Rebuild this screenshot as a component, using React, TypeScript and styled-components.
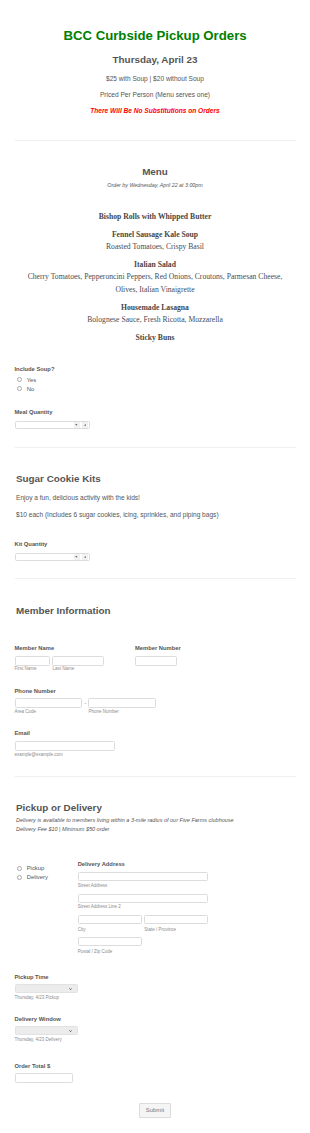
import React from "react";
import styled, { createGlobalStyle } from "styled-components";

const GlobalStyle = createGlobalStyle`
  html, body { margin: 0; padding: 0; background: #ffffff; }
  body { font-family: "Liberation Sans", Arial, sans-serif; color: #555555; }
  * { box-sizing: border-box; }
`;

const Page = styled.div`
  width: 310px;
  padding: 0 14.5px 15px;
  display: flex;
  flex-direction: column;
  align-items: flex-start;
`;

const Header = styled.header`
  align-self: stretch;
  display: flex;
  flex-direction: column;
  align-items: center;
  text-align: center;
`;

const Title = styled.h1`
  margin: 27.5px 0 0;
  font-size: 13.2px;
  line-height: 16px;
  font-weight: 700;
  color: #008000;
`;

const DateHeading = styled.h2`
  margin: 10.5px 0 0;
  font-size: 9.86px;
  line-height: 12px;
  font-weight: 700;
  color: #555555;
`;

const InfoText = styled.p<{ $mt?: number; $lh?: number }>`
  margin: ${(p) => p.$mt ?? 0}px 0 0;
  font-size: 6.58px;
  line-height: ${(p) => p.$lh ?? 16}px;
  color: #555555;
`;

const Warning = styled(InfoText)`
  color: #ff0000;
  font-weight: 700;
  font-style: italic;
`;

const Divider = styled.hr<{ $mt: number }>`
  align-self: stretch;
  margin: ${(p) => p.$mt}px 0 0;
  border: 0;
  height: 1px;
  background: #efefef;
`;

const SectionTitle = styled.h3<{ $mt: number; $center?: boolean }>`
  margin: ${(p) => p.$mt}px 0 0;
  padding-left: ${(p) => (p.$center ? 0 : 1.5)}px;
  align-self: ${(p) => (p.$center ? "center" : "flex-start")};
  font-size: 9.86px;
  line-height: 12px;
  font-weight: 700;
  color: #555555;
`;

const Note = styled.p<{ $mt: number; $size: number; $lh: number; $center?: boolean }>`
  margin: ${(p) => p.$mt}px 0 0;
  padding-left: ${(p) => (p.$center ? 0 : 1.5)}px;
  align-self: ${(p) => (p.$center ? "center" : "flex-start")};
  font-size: ${(p) => p.$size}px;
  line-height: ${(p) => p.$lh}px;
  font-style: italic;
  color: #555555;
`;

const BodyText = styled.p<{ $mt: number }>`
  margin: ${(p) => p.$mt}px 0 0;
  padding-left: 1.5px;
  font-size: 6.58px;
  line-height: 8px;
  color: #555555;
`;

const MenuList = styled.div`
  align-self: center;
  width: 272px;
  margin-top: 21.85px;
  display: flex;
  flex-direction: column;
  gap: 5.7px;
  text-align: center;
  font-family: "Liberation Serif", "Times New Roman", serif;
  font-size: 7.66px;
  line-height: 12.3px;
`;

const Dish = styled.div``;

const DishName = styled.div`
  font-weight: 700;
  color: #474747;
`;

const DishDesc = styled.div`
  color: #4a4b52;
`;

const FieldLabel = styled.label<{ $mt?: number }>`
  display: block;
  margin-top: ${(p) => p.$mt ?? 0}px;
  font-size: 5.8px;
  line-height: 7px;
  font-weight: 700;
  color: #555555;
  white-space: nowrap;
`;

const TextInput = styled.input<{ $w: number; $h: number; $mt?: number }>`
  display: block;
  appearance: none;
  width: ${(p) => p.$w}px;
  height: ${(p) => p.$h}px;
  margin: ${(p) => p.$mt ?? 0}px 0 0;
  padding: 0;
  border: 1px solid #dcdcdc;
  border-radius: 1.5px;
  background: #ffffff;
  outline: none;
`;

const SubLabel = styled.span<{ $mt?: number }>`
  display: block;
  margin-top: ${(p) => p.$mt ?? 0}px;
  font-size: 4.5px;
  line-height: 5px;
  color: #8c8c8c;
  white-space: nowrap;
`;

const RadioGroup = styled.div<{ $mt?: number }>`
  display: flex;
  flex-direction: column;
  margin-top: ${(p) => p.$mt ?? 0}px;
  padding-left: 2.7px;
`;

const RadioRow = styled.label`
  display: flex;
  align-items: center;
  gap: 4.5px;
  height: 9px;
  font-size: 5.9px;
  color: #555555;
`;

const RadioInput = styled.input`
  appearance: none;
  flex: none;
  width: 5px;
  height: 5px;
  margin: 0;
  border: 0.6px solid #a8a8a8;
  border-radius: 50%;
  background: #ffffff;
`;

const NumberBox = styled.div<{ $mt: number }>`
  width: 75px;
  height: 8.5px;
  margin-top: ${(p) => p.$mt}px;
  border: 1px solid #dcdcdc;
  border-radius: 1.5px;
  background: #ffffff;
  display: flex;
  align-items: center;
  justify-content: flex-end;
  gap: 2.4px;
  padding-right: 0.6px;
`;

const SpinButton = styled.span`
  width: 6px;
  height: 5.5px;
  background: #f1f1f1;
  display: flex;
  align-items: center;
  justify-content: center;
`;

const SelectBox = styled.div<{ $mt: number }>`
  width: 63px;
  height: 9.4px;
  margin-top: ${(p) => p.$mt}px;
  border: 0.5px solid #e2e2e2;
  border-radius: 1.5px;
  background: #ececec;
  display: flex;
  align-items: center;
  justify-content: flex-end;
  padding-right: 4.2px;
`;

const Row = styled.div<{ $mt?: number; $gap?: number }>`
  display: flex;
  align-items: flex-start;
  gap: ${(p) => p.$gap ?? 0}px;
  margin-top: ${(p) => p.$mt ?? 0}px;
`;

const Col = styled.div<{ $w?: number; $pt?: number }>`
  display: flex;
  flex-direction: column;
  width: ${(p) => (p.$w ? `${p.$w}px` : "auto")};
  padding-top: ${(p) => p.$pt ?? 0}px;
  flex: none;
`;

const Dash = styled.span`
  width: 6.3px;
  height: 10px;
  display: flex;
  align-items: center;
  justify-content: center;
  font-size: 5.5px;
  color: #777777;
`;

const SubmitButton = styled.button`
  align-self: center;
  margin-top: 20px;
  width: 32px;
  height: 14.5px;
  padding: 0;
  border: 1px solid #dcdcdc;
  border-radius: 1px;
  background: #f5f5f5;
  font-family: "Liberation Sans", Arial, sans-serif;
  font-size: 5.9px;
  color: #777777;
`;

const Triangle = ({ up }: { up?: boolean }) => (
  <svg width="2.6" height="1.8" viewBox="0 0 4 3">
    <path d={up ? "M0 3 L2 0 L4 3 Z" : "M0 0 L4 0 L2 3 Z"} fill="#6a6a6a" />
  </svg>
);

const Chevron = () => (
  <svg width="3.2" height="2.2" viewBox="0 0 6 4">
    <path d="M0.6 0.6 L3 3 L5.4 0.6" fill="none" stroke="#333" strokeWidth="1.4" />
  </svg>
);

const NumberField = ({ mt }: { mt: number }) => (
  <NumberBox $mt={mt}>
    <SpinButton>
      <Triangle />
    </SpinButton>
    <SpinButton>
      <Triangle up />
    </SpinButton>
  </NumberBox>
);

const SelectField = ({ mt }: { mt: number }) => (
  <SelectBox $mt={mt}>
    <Chevron />
  </SelectBox>
);

export default function App() {
  return (
    <>
      <GlobalStyle />
      <Page>
        <Header>
          <Title>BCC Curbside Pickup Orders</Title>
          <DateHeading>Thursday, April 23</DateHeading>
          <InfoText $mt={5}>$25 with Soup | $20 without Soup</InfoText>
          <InfoText>Priced Per Person (Menu serves one)</InfoText>
          <Warning>There Will Be No Substitutions on Orders</Warning>
        </Header>
        <Divider $mt={21} />

        <SectionTitle $mt={25} $center>
          Menu
        </SectionTitle>
        <Note $mt={3} $size={5.3} $lh={8} $center>
          Order by Wednesday, April 22 at 3:00pm
        </Note>
        <MenuList>
          <Dish>
            <DishName>Bishop Rolls with Whipped Butter</DishName>
          </Dish>
          <Dish>
            <DishName>Fennel Sausage Kale Soup</DishName>
            <DishDesc>Roasted Tomatoes, Crispy Basil</DishDesc>
          </Dish>
          <Dish>
            <DishName>Italian Salad</DishName>
            <DishDesc>
              Cherry Tomatoes, Pepperoncini Peppers, Red Onions, Croutons, Parmesan Cheese, Olives,
              Italian Vinaigrette
            </DishDesc>
          </Dish>
          <Dish>
            <DishName>Housemade Lasagna</DishName>
            <DishDesc>Bolognese Sauce, Fresh Ricotta, Mozzarella</DishDesc>
          </Dish>
          <Dish>
            <DishName>Sticky Buns</DishName>
          </Dish>
        </MenuList>

        <FieldLabel $mt={22.15}>Include Soup?</FieldLabel>
        <RadioGroup $mt={2}>
          <RadioRow>
            <RadioInput type="radio" name="soup" />
            Yes
          </RadioRow>
          <RadioRow>
            <RadioInput type="radio" name="soup" />
            No
          </RadioRow>
        </RadioGroup>
        <FieldLabel $mt={15.7}>Meal Quantity</FieldLabel>
        <NumberField mt={4.8} />
        <Divider $mt={17.2} />

        <SectionTitle $mt={25}>Sugar Cookie Kits</SectionTitle>
        <BodyText $mt={9}>Enjoy a fun, delicious activity with the kids!</BodyText>
        <BodyText $mt={9.3}>$10 each (Includes 6 sugar cookies, icing, sprinkles, and piping bags)</BodyText>
        <FieldLabel $mt={22.2}>Kit Quantity</FieldLabel>
        <NumberField mt={4.8} />
        <Divider $mt={16.5} />

        <SectionTitle $mt={25.7}>Member Information</SectionTitle>
        <Row $mt={28.5}>
          <Col $w={120.5}>
            <FieldLabel>Member Name</FieldLabel>
            <Row $mt={3.5} $gap={2.6}>
              <Col>
                <TextInput $w={35.4} $h={10} />
                <SubLabel $mt={0.8}>First Name</SubLabel>
              </Col>
              <Col>
                <TextInput $w={51.4} $h={10} />
                <SubLabel $mt={0.8}>Last Name</SubLabel>
              </Col>
            </Row>
          </Col>
          <Col>
            <FieldLabel>Member Number</FieldLabel>
            <TextInput $w={41.7} $h={10} $mt={3.5} />
          </Col>
        </Row>
        <FieldLabel $mt={16.3}>Phone Number</FieldLabel>
        <Row $mt={3.5}>
          <Col>
            <TextInput $w={67.7} $h={10} />
            <SubLabel $mt={1.2}>Area Code</SubLabel>
          </Col>
          <Dash>-</Dash>
          <Col>
            <TextInput $w={67.4} $h={10} />
            <SubLabel $mt={1.2}>Phone Number</SubLabel>
          </Col>
        </Row>
        <FieldLabel $mt={16}>Email</FieldLabel>
        <TextInput $w={100.4} $h={10} $mt={3.8} />
        <SubLabel $mt={0.9}>example@example.com</SubLabel>
        <Divider $mt={18.8} />

        <SectionTitle $mt={25.3}>Pickup or Delivery</SectionTitle>
        <Note $mt={1.6} $size={5.5} $lh={9.6}>
          Delivery is available to members living within a 3-mile radius of our Five Farms clubhouse
        </Note>
        <Note $mt={0} $size={5.5} $lh={9.6}>
          Delivery Fee $10 | Minimum $50 order
        </Note>
        <Row $mt={26.1}>
          <Col $w={63.2} $pt={3}>
            <RadioGroup>
              <RadioRow>
                <RadioInput type="radio" name="method" />
                Pickup
              </RadioRow>
              <RadioRow>
                <RadioInput type="radio" name="method" />
                Delivery
              </RadioRow>
            </RadioGroup>
          </Col>
          <Col>
            <FieldLabel>Delivery Address</FieldLabel>
            <TextInput $w={130} $h={9} $mt={4.5} />
            <SubLabel $mt={1.5}>Street Address</SubLabel>
            <TextInput $w={130} $h={9} $mt={5.8} />
            <SubLabel $mt={1.5}>Street Address Line 2</SubLabel>
            <Row $mt={6.2} $gap={2.6}>
              <Col>
                <TextInput $w={64} $h={9} />
                <SubLabel $mt={2.1}>City</SubLabel>
              </Col>
              <Col>
                <TextInput $w={63.4} $h={9} />
                <SubLabel $mt={2.1}>State / Province</SubLabel>
              </Col>
            </Row>
            <TextInput $w={64} $h={9} $mt={5.9} />
            <SubLabel $mt={2.5}>Postal / Zip Code</SubLabel>
          </Col>
        </Row>

        <FieldLabel $mt={19.6}>Pickup Time</FieldLabel>
        <SelectField mt={3.5} />
        <SubLabel $mt={1.1}>Thursday, 4/23 Pickup</SubLabel>
        <FieldLabel $mt={16}>Delivery Window</FieldLabel>
        <SelectField mt={3.5} />
        <SubLabel $mt={1.1}>Thursday, 4/23 Delivery</SubLabel>
        <FieldLabel $mt={21}>Order Total $</FieldLabel>
        <TextInput $w={58.4} $h={10} $mt={3.5} />
        <SubmitButton type="button">Submit</SubmitButton>
      </Page>
    </>
  );
}
